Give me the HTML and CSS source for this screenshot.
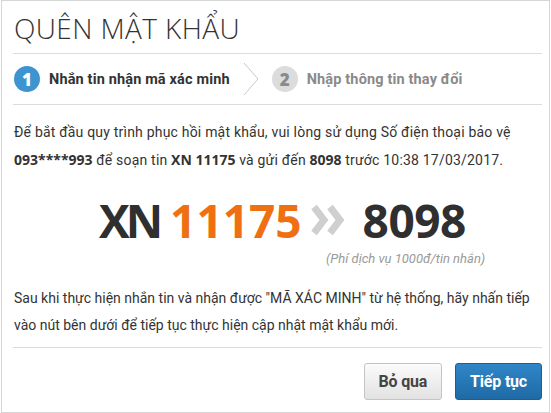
FILE: index.html
```html
<!DOCTYPE html>
<html lang="vi">
<head>
    <meta charset="UTF-8">
    <title>Quên mật khẩu</title>
    <link rel="stylesheet" href="styles.css">
</head>
<body>
    <div class="dialog">
        <div class="title">
            <h1>QUÊN MẬT KHẨU</h1>
        </div>
        <div class="steps">
            <div class="step active">
                <span class="num">1</span>
                <span class="label">Nhắn tin nhận mã xác minh</span>
            </div>
            <svg class="sep" width="16" height="34" viewBox="0 0 16 34">
                <polyline points="1,1 15,17 1,33" fill="none" stroke="#c8c8c8" stroke-width="1"/>
            </svg>
            <div class="step">
                <span class="num">2</span>
                <span class="label">Nhập thông tin thay đổi</span>
            </div>
        </div>
        <div class="content">
            <p class="intro">Để bắt đầu quy trình phục hồi mật khẩu, vui lòng sử dụng Số điện thoại bảo vệ <b>093****993</b> để soạn tin <b>XN 11175</b> và gửi đến <b>8098</b> trước 10:38 17/03/2017.</p>
            <div class="sms">
                <div class="code">
                    <span class="kw">XN</span>
                    <span class="otp">11175</span>
                    <svg class="arrows" width="36" height="32" viewBox="0 0 36 32">
                        <polyline points="4,3 14,16 4,29" fill="none" stroke="#cfcfcf" stroke-width="7"/>
                        <polyline points="20,3 30,16 20,29" fill="none" stroke="#cfcfcf" stroke-width="7"/>
                    </svg>
                    <span class="phone">8098</span>
                </div>
                <div class="fee">(Phí dịch vụ 1000đ/tin nhắn)</div>
            </div>
            <p class="note">Sau khi thực hiện nhắn tin và nhận được "MÃ XÁC MINH" từ hệ thống, hãy nhấn tiếp vào nút bên dưới để tiếp tục thực hiện cập nhật mật khẩu mới.</p>
        </div>
        <div class="actions">
            <a href="#" class="btn">Bỏ qua</a>
            <a href="#" class="btn primary">Tiếp tục</a>
        </div>
    </div>
</body>
</html>
```
FILE: styles.css
```css
body {
    margin: 0;
    background: #fff;
    font-family: Roboto, "Liberation Sans", sans-serif;
    color: #333;
}
.dialog {
    height: 413px;
    box-sizing: border-box;
    border: 1px solid #d6d6d6;
    margin: 0 1px;
    padding: 0 7px 0 11px;
    display: flex;
    flex-direction: column;
}
.title {
    height: 52px;
    border-bottom: 1px solid #dcdcdc;
    display: flex;
    align-items: center;
}
.title h1 {
    margin: 0;
    padding: 2px 0 0 1px;
    font-family: "Open Sans", sans-serif;
    font-weight: 300;
    font-size: 28px;
    color: #333;
    letter-spacing: 0.4px;
}
.steps {
    height: 50px;
    border-bottom: 1px solid #dcdcdc;
    display: flex;
    align-items: center;
    padding-left: 1px;
}
.step {
    display: flex;
    align-items: center;
    gap: 9px;
}
.step .num {
    width: 26px;
    height: 26px;
    border-radius: 50%;
    background: #dcdcdc;
    color: #8a8a8a;
    font-family: "Open Sans", sans-serif;
    font-weight: 800;
    font-size: 17px;
    display: flex;
    align-items: center;
    justify-content: center;
}
.step .label {
    font-weight: 700;
    font-size: 14.5px;
    letter-spacing: 0.15px;
    color: #8a8a8a;
}
.step.active .num {
    background: #3d94d0;
    color: #fff;
}
.step.active .label {
    color: #333;
}
.sep {
    flex-shrink: 0;
    margin: 0 13px 0 13px;
}
.content {
    flex: 1;
    padding: 0 1px;
}
.intro {
    margin: 14px 0 0;
    font-size: 14px;
    line-height: 27px;
    letter-spacing: 0.2px;
    color: #333;
}
.intro b {
    font-family: "Open Sans", sans-serif;
    font-weight: 700;
    letter-spacing: 0;
}
.sms {
    margin: 18px 0 0 85px;
}
.code {
    display: flex;
    align-items: center;
    font-family: "Open Sans", sans-serif;
    font-weight: 700;
    font-size: 46px;
    line-height: 56px;
    color: #2f2f2f;
}
.code .kw {
    letter-spacing: -4px;
}
.code .otp {
    color: #ef7012;
    margin-left: 11px;
}
.code .phone {
    letter-spacing: -0.5px;
}
.arrows {
    flex-shrink: 0;
    margin: 0 17px 0 8px;
}
.fee {
    margin: 3px 0 0 227px;
    font-style: italic;
    font-size: 13px;
    color: #9a9a9a;
}
.note {
    margin: 19px 0 0;
    font-size: 14px;
    line-height: 27px;
    color: #333;
}
.actions {
    height: 63px;
    box-sizing: border-box;
    border-top: 1px solid #dcdcdc;
    display: flex;
    justify-content: flex-end;
    align-items: flex-start;
    gap: 13px;
    padding-top: 15px;
    margin-bottom: 2px;
}
.btn {
    display: inline-block;
    height: 37px;
    box-sizing: border-box;
    line-height: 35px;
    padding: 0 14px;
    border-radius: 3px;
    font-weight: 700;
    font-size: 16px;
    letter-spacing: -0.2px;
    text-decoration: none;
    color: #444;
    background: linear-gradient(#fbfbfb, #e2e2e2);
    border: 1px solid #c4c4c4;
}
.btn.primary {
    color: #fff;
    background: linear-gradient(#2f86c8, #1f6aa5);
    border-color: #1c5f94;
}
```
